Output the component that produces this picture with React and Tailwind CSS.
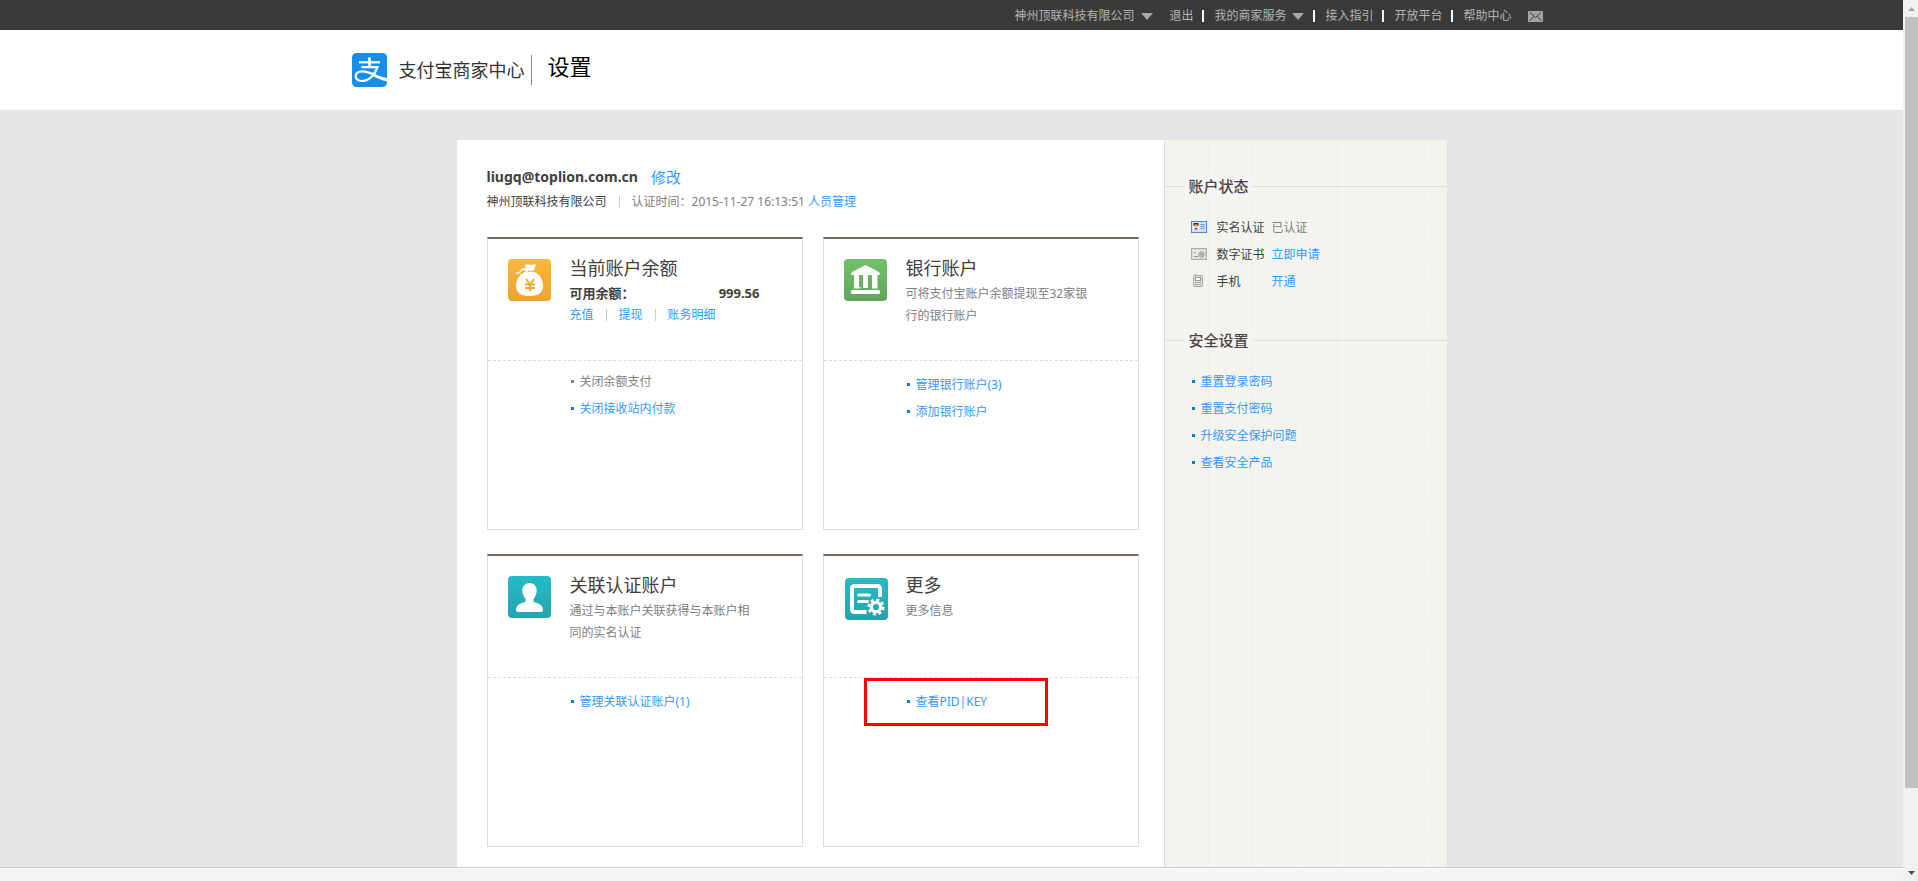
const ArrowDown = () => (
  <svg width="12" height="7" viewBox="0 0 12 7" aria-hidden="true">
    <path d="M0 0h12L6 7z" fill="#a8a8a8" />
  </svg>
);

const MailIcon = () => (
  <svg width="15" height="11" viewBox="0 0 15 11" aria-hidden="true">
    <rect width="15" height="11" fill="#a3a3a3" />
    <path
      d="M2 1.500L7.500 6.500l5.500-5M2 9.500L5.500 5.500M13 9.500L9.500 5.500"
      fill="none"
      stroke="#3a3a3a"
      strokeWidth="1"
    />
  </svg>
);

const LogoMark = () => (
  <svg width="35" height="34" viewBox="0 0 35 34" aria-hidden="true">
    <rect width="35" height="34" rx="4.500" fill="#158fed" />
    <g fill="none" stroke="#fff" strokeWidth="2.200">
      <path d="M7 9.300h21" />
      <path d="M17.500 4.500V14" strokeWidth="2.800" />
      <path d="M9.500 14.200H25.500C23.500 20 18 28 10.500 28 6 28 3.700 25.700 3.700 23.200c0-3 2.800-4.900 6.300-4.900 5 0 9.500 1.900 14 4" />
    </g>
    <path d="M20 20.200c5 2 10 3.800 15 4.800v3.500c-5-1-10.500-3.500-16-6.300z" fill="#fff" />
  </svg>
);

const Tile = ({ id, from, to, x = 0, y = 0, children }) => (
  <svg
    width="44"
    height="44"
    viewBox="0 0 44 44"
    className="shrink-0"
    aria-hidden="true"
  >
    <defs>
      <linearGradient id={id} x1="0" y1="0" x2="0" y2="1">
        <stop offset="0" stopColor={from} />
        <stop offset="1" stopColor={to} />
      </linearGradient>
    </defs>
    <g transform={`translate(${x} ${y})`}>
      <rect width="43" height="42" rx="4" fill={`url(#${id})`} />
      {children}
    </g>
  </svg>
);

const BalanceIcon = () => (
  <Tile id="tile-balance" from="#fbb63d" to="#eca530">
    <path
      d="M17 6c3-1.600 4 .4 6 0s3.500-1.300 5-.2L25.500 12.500C31 14.500 35 20.500 35 27c0 6-4 10-13.500 10S8 33 8 27c0-6.500 4.500-12.500 10-14.500z"
      fill="#fff"
    />
    <path d="M18 12.200h8" stroke="#f6b03a" strokeWidth="1.200" />
    <path
      d="M19 12.500c-2-3-5-3-6-1s-2.500 3-4.500 2.500M18 13.500c-2 0-3 3-5 2.500"
      fill="none"
      stroke="#fff"
      strokeWidth="1.600"
      strokeLinecap="round"
    />
    <path
      d="M18 20l4 5.500 4-5.500M17 25.500h10M17 29h10M22 25v7.500"
      fill="none"
      stroke="#f2ab34"
      strokeWidth="2"
    />
  </Tile>
);

const BankIcon = () => (
  <Tile id="tile-bank" from="#70c269" to="#66a35e">
    <path
      d="M21.500 6L34 12.500c2 1 2.200 2.500 1.500 3.500h-28c-.8-1-.5-2.500 1.500-3.500z"
      fill="#fff"
    />
    <path
      d="M10 15h5v13h1.500v1.500h-6.500zM19 15h5v14h-5zM28 15h5.500v14.500h-5.500z"
      fill="#fff"
    />
    <rect x="7" y="31" width="29" height="4" rx="1.500" fill="#fff" />
  </Tile>
);

const PersonIcon = () => (
  <Tile id="tile-person" from="#24bcc5" to="#25a3ad">
    <path
      d="M21.500 7c4.400 0 7.200 3.200 7.200 7.500 0 3.500-1.500 6.300-3.200 8.300v3c5 1.700 9.500 3 9.500 8.200 0 1.200-.6 2-1.800 2H9.800C8.600 36 8 35.200 8 34c0-5.200 4.500-6.500 9.500-8.200v-3c-1.700-2-3.200-4.800-3.200-8.300C14.300 10.200 17.100 7 21.500 7z"
      fill="#fff"
    />
  </Tile>
);

const MoreIcon = () => (
  <Tile id="tile-more" from="#24bcc5" to="#25a3ad" x={1} y={2}>
    <path
      d="M21.500 34H9.500a2.500 2.500 0 0 1-2.500-2.500V10.500A2.500 2.500 0 0 1 9.500 8h23a2.500 2.500 0 0 1 2.500 2.500V19"
      fill="none"
      stroke="#fff"
      strokeWidth="4"
    />
    <path
      d="M13.500 17h11M13.500 23.500h9"
      stroke="#fff"
      strokeWidth="3"
      strokeLinecap="round"
    />
    <circle
      cx="31"
      cy="29"
      r="7"
      fill="none"
      stroke="#fff"
      strokeWidth="3.200"
      strokeDasharray="2.900 2.600"
    />
    <circle cx="31" cy="29" r="4.700" fill="none" stroke="#fff" strokeWidth="3.200" />
  </Tile>
);

const IdCardIcon = () => (
  <svg width="16" height="16" viewBox="0 0 16 16" aria-hidden="true">
    <rect x=".5" y="1.500" width="15" height="11" fill="#cfe4fb" stroke="#4f86d8" />
    <rect x="2" y="3" width="6" height="7" fill="#fff" />
    <path d="M2.500 3h5v3h-5z" fill="#4a2412" />
    <circle cx="5" cy="6" r="1.800" fill="#f7b183" />
    <path d="M3 9.500c0-2 4-2 4 0z" fill="#c0322b" />
    <path d="M9.500 4.500h4M9.500 6.500h4M9.500 8.500h4" stroke="#5f95e0" />
  </svg>
);

const CertIcon = () => (
  <svg width="16" height="16" viewBox="0 0 16 16" aria-hidden="true">
    <rect x=".5" y="1.500" width="15" height="11" fill="#e9e9e9" stroke="#adadad" />
    <rect
      x="1.500"
      y="2.500"
      width="13"
      height="9"
      fill="none"
      stroke="#c4c4c4"
      strokeDasharray="1 1"
    />
    <path d="M3 5.500h2M3 9.500h4" stroke="#8f8f8f" />
    <circle cx="10.500" cy="7.500" r="2.800" fill="#c9c9c9" stroke="#9f9f9f" />
    <circle cx="10.500" cy="7.500" r="1" fill="#858585" />
  </svg>
);

const PhoneIcon = () => (
  <svg width="16" height="16" viewBox="0 0 16 16" aria-hidden="true">
    <path d="M4.500 0v3" stroke="#999" />
    <rect x="2.500" y="1.500" width="9" height="11" rx="1.500" fill="#e4e4e4" stroke="#a3a3a3" />
    <rect x="4.500" y="3.500" width="5" height="3" fill="#fff" stroke="#999" />
    <path d="M4 8.500h6M4 10.500h6" stroke="#8d8d8d" strokeDasharray="1.500 .7" />
  </svg>
);

const Divider = () => <span className="h-3 w-px bg-[#ccc]" />;

const NavDivider = () => <span className="ml-[9px] mr-[10px] h-3 w-[2px] bg-white" />;

const Link = ({ children }) => (
  <a href="#" className="text-[#3399ff] hover:underline">
    {children}
  </a>
);

const BulletItem = ({ muted, children }) => (
  <li className="flex items-center gap-[6px] leading-[27px]">
    {muted ? (
      <>
        <span className="size-[3px] bg-[#808080]" />
        <span className="text-[#808080]">{children}</span>
      </>
    ) : (
      <>
        <span className="size-[3px] bg-[#0083cb]" />
        <Link>{children}</Link>
      </>
    )}
  </li>
);

const Card = ({ icon, title, children, list, listClass = "pt-[10px]", highlight }) => (
  <section className="flex min-h-[293px] flex-col border border-t-2 border-[#ddd] border-t-[#776a5b]">
    <div className="flex min-h-[122px] gap-[18px] border-b border-dashed border-[#ddd] pl-5">
      <div className="pt-5">{icon}</div>
      <div className="max-w-[190px] flex-1 pt-[17px]">
        <h3 className="font-[Liberation_Serif,Noto_Sans_CJK_SC,serif] text-lg leading-[27px] text-[#404040]">
          {title}
        </h3>
        <div className="leading-[22px] text-[#808080]">{children}</div>
      </div>
    </div>
    <div className="relative">
      <ul className={`pl-[83px] ${listClass}`}>{list}</ul>
      {highlight && (
        <div className="pointer-events-none absolute left-10 top-0 h-12 w-46 border-3 border-[#ff0000]" />
      )}
    </div>
  </section>
);

const SideTitle = ({ children }) => (
  <div className="flex items-center">
    <span className="h-px w-5 bg-[#ddd]" />
    <h3 className="bg-[#f4f4f4] px-1 text-[15px] font-medium leading-[22px] text-[#4d4343]">
      {children}
    </h3>
    <span className="h-px flex-1 bg-[#ddd]" />
  </div>
);

const TopBar = () => (
  <nav className="bg-[#3a3a3a] text-xs text-[#b5b5b5]">
    <div className="mx-auto flex h-[30px] max-w-[1200px] items-center justify-end pr-[9px] pt-[2px]">
      <a href="#" className="mr-4 flex items-center gap-[7px]">
        神州顶联科技有限公司
        <ArrowDown />
      </a>
      <a href="#">退出</a>
      <NavDivider />
      <a href="#" className="flex items-center gap-[6px]">
        我的商家服务
        <ArrowDown />
      </a>
      <NavDivider />
      <a href="#">接入指引</a>
      <NavDivider />
      <a href="#">开放平台</a>
      <NavDivider />
      <a href="#">帮助中心</a>
      <a href="#" aria-label="消息" className="ml-4">
        <MailIcon />
      </a>
    </div>
  </nav>
);

const Header = () => (
  <header className="bg-white">
    <div className="mx-auto flex h-20 max-w-[1200px] items-center">
      <LogoMark />
      <span className="ml-3 text-lg text-[#333]">支付宝商家中心</span>
      <span className="ml-[6px] h-[30px] w-px bg-[#888]" />
      <h1 className="ml-4 pb-2 text-[22px] leading-7 text-black">设置</h1>
    </div>
  </header>
);

const Sidebar = () => (
  <aside className="w-[283px] border-l border-[#ddd] bg-[#f3f4ee] bg-[repeating-linear-gradient(90deg,#f0f1eb_0px,#f0f1eb_1px,transparent_1px,transparent_4px,#f5f6f0_4px,#f5f6f0_6px,transparent_6px,transparent_43px),repeating-linear-gradient(0deg,#f1f2ec_0px,#f1f2ec_1px,transparent_1px,transparent_8px,#f2f3ed_8px,#f2f3ed_9px,transparent_9px,transparent_42px)] pt-[35px]">
    <SideTitle>账户状态</SideTitle>
    <table className="ml-[26px] mt-[17px]">
      <tbody>
        <tr className="h-[27px]">
          <td className="w-[26px]">
            <IdCardIcon />
          </td>
          <td className="w-[55px] text-[#404040]">实名认证</td>
          <td className="text-[#808080]">已认证</td>
        </tr>
        <tr className="h-[27px]">
          <td>
            <CertIcon />
          </td>
          <td className="text-[#404040]">数字证书</td>
          <td>
            <Link>立即申请</Link>
          </td>
        </tr>
        <tr className="h-[27px]">
          <td>
            <PhoneIcon />
          </td>
          <td className="text-[#404040]">手机</td>
          <td>
            <Link>开通</Link>
          </td>
        </tr>
      </tbody>
    </table>
    <div className="mt-[34px]">
      <SideTitle>安全设置</SideTitle>
    </div>
    <ul className="ml-[27px] mt-[17px]">
      <BulletItem>重置登录密码</BulletItem>
      <BulletItem>重置支付密码</BulletItem>
      <BulletItem>升级安全保护问题</BulletItem>
      <BulletItem>查看安全产品</BulletItem>
    </ul>
  </aside>
);

const ScrollTrack = () => (
  <div
    className="sticky top-0 flex h-screen w-[15px] flex-col bg-[#f1f1f1] pl-[2px]"
    aria-hidden="true"
  >
    <div className="flex h-[17px] items-center justify-center">
      <svg width="7" height="4" viewBox="0 0 7 4">
        <path d="M3.500 0L7 4H0z" fill="#a3a3a3" />
      </svg>
    </div>
    <div className="flex-1">
      <div className="h-[91%] bg-[#c1c1c1]" />
    </div>
    <div className="flex h-[17px] items-center justify-center">
      <svg width="7" height="4" viewBox="0 0 7 4">
        <path d="M3.500 4L7 0H0z" fill="#505050" />
      </svg>
    </div>
  </div>
);

export default function App() {
  return (
    <div className="flex font-[Noto_Sans,Noto_Sans_CJK_SC,sans-serif] text-xs">
      <div className="flex min-h-screen min-w-0 flex-1 flex-col bg-[#e5e5e5]">
        <TopBar />
        <Header />

        <div className="mx-auto mt-[30px] flex w-full max-w-[990px]">
          <main className="flex-1 bg-white pb-5 pl-[30px] pr-[25px] pt-6">
            <div className="flex items-center gap-[13px] leading-[26px]">
              <h2 className="text-sm font-bold text-[#404040]">liugq@toplion.com.cn</h2>
              <span className="text-[15px]">
                <Link>修改</Link>
              </span>
            </div>
            <div className="flex items-center leading-6 text-[#808080]">
              <span className="mr-3 text-[#404040]">神州顶联科技有限公司</span>
              <Divider />
              <span className="ml-3 mr-[3px]">认证时间：2015-11-27 16:13:51</span>
              <Link>人员管理</Link>
            </div>

            <div className="mt-[23px] grid grid-cols-2 gap-x-5 gap-y-6">
              <Card
                icon={<BalanceIcon />}
                title="当前账户余额"
                listClass="pt-[7px]"
                list={
                  <>
                    <BulletItem muted>关闭余额支付</BulletItem>
                    <BulletItem>关闭接收站内付款</BulletItem>
                  </>
                }
              >
                <div className="flex justify-between text-[13px] font-bold leading-5 text-[#404040]">
                  <span>可用余额：</span>
                  <span>999.56</span>
                </div>
                <div className="flex items-center gap-3 leading-6">
                  <Link>充值</Link>
                  <Divider />
                  <Link>提现</Link>
                  <Divider />
                  <Link>账务明细</Link>
                </div>
              </Card>
              <Card
                icon={<BankIcon />}
                title="银行账户"
                list={
                  <>
                    <BulletItem>管理银行账户(3)</BulletItem>
                    <BulletItem>添加银行账户</BulletItem>
                  </>
                }
              >
                可将支付宝账户余额提现至32家银行的银行账户
              </Card>
              <Card
                icon={<PersonIcon />}
                title="关联认证账户"
                list={<BulletItem>管理关联认证账户(1)</BulletItem>}
              >
                通过与本账户关联获得与本账户相同的实名认证
              </Card>
              <Card
                icon={<MoreIcon />}
                title="更多"
                highlight
                list={<BulletItem>查看PID|KEY</BulletItem>}
              >
                更多信息
              </Card>
            </div>
          </main>
          <Sidebar />
        </div>

        <footer className="min-h-[14px] flex-1 border-t border-[#c9c9c9] bg-[#f4f4f4]">
          <div className="h-px bg-white" />
        </footer>
      </div>
      <ScrollTrack />
    </div>
  );
}
